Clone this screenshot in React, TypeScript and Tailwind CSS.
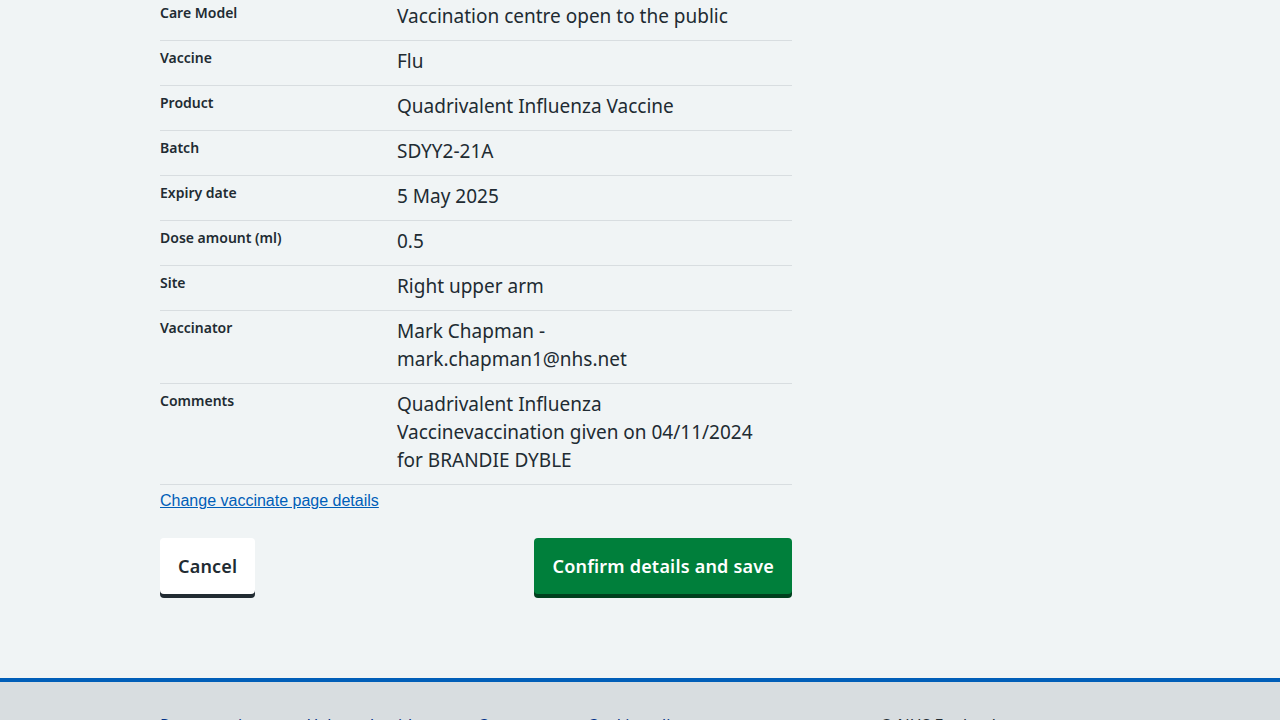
const rows: { key: string; value: string[] }[] = [
  { key: "Care Model", value: ["Vaccination centre open to the public"] },
  { key: "Vaccine", value: ["Flu"] },
  { key: "Product", value: ["Quadrivalent Influenza Vaccine"] },
  { key: "Batch", value: ["SDYY2-21A"] },
  { key: "Expiry date", value: ["5 May 2025"] },
  { key: "Dose amount (ml)", value: ["0.5"] },
  { key: "Site", value: ["Right upper arm"] },
  { key: "Vaccinator", value: ["Mark Chapman -", "mark.chapman1@nhs.net"] },
  {
    key: "Comments",
    value: [
      "Quadrivalent Influenza",
      "Vaccinevaccination given on 04/11/2024",
      "for BRANDIE DYBLE",
    ],
  },
];

const footerLinks = ["Report an issue", "Help and guidance", "Contact us", "Cookie policy"];

const App = () => {
  return (
    <div
      className="flex h-[720px] flex-col overflow-hidden bg-[#f0f4f5] text-[#212b32]"
      style={{ fontFamily: "'Noto Sans', Lato, sans-serif" }}
    >
      <div className="mx-auto w-[960px]">
        <main className="w-[632px] pb-[84px]">
          <dl className="m-0">
            {rows.map((row, i) => (
              <div
                key={row.key}
                className={`grid grid-cols-[237px_1fr] border-b border-[#d8dde0] ${
                  i === 0 ? "pt-1" : "pt-2"
                } pb-2`}
              >
                <dt className="text-[14px] font-semibold leading-[18px]">{row.key}</dt>
                <dd className="m-0 -mt-[2px] pb-[2px] text-[19px] leading-[28px]">
                  {row.value.map((line) => (
                    <div key={line}>{line}</div>
                  ))}
                </dd>
              </div>
            ))}
          </dl>

          <a
            href="#"
            className="mt-[5px] inline-block text-[16px] leading-[22px] text-[#005eb8] underline"
            style={{ fontFamily: "'Liberation Sans', Arial, sans-serif" }}
          >
            Change vaccinate page details
          </a>

          <div className="mt-[26px] flex items-start justify-between">
            <button className="rounded-[4px] border-2 border-transparent bg-white px-4 py-3 text-[18px] font-semibold leading-[28px] tracking-[0.2px] text-[#212b32] shadow-[0_4px_0_#212b32]">
              Cancel
            </button>
            <button className="rounded-[4px] border-2 border-transparent bg-[#007f3b] px-4 py-3 text-[18px] font-semibold leading-[28px] tracking-[0.2px] text-white shadow-[0_4px_0_#00401e]">
              Confirm details and save
            </button>
          </div>
        </main>
      </div>

      <footer className="border-t-4 border-[#005eb8] bg-[#d8dde0] pt-[31px]">
        <div className="mx-auto flex w-[960px] items-start">
          <ul className="m-0 flex w-[720px] list-none gap-[30px] p-0">
            {footerLinks.map((l) => (
              <li key={l}>
                <a href="#" className="text-[16px] leading-6 text-[#003087] underline">
                  {l}
                </a>
              </li>
            ))}
          </ul>
          <p className="m-0 text-[16px] leading-6 text-[#212b32]">© NHS England</p>
        </div>
      </footer>
    </div>
  );
};

export default App;
